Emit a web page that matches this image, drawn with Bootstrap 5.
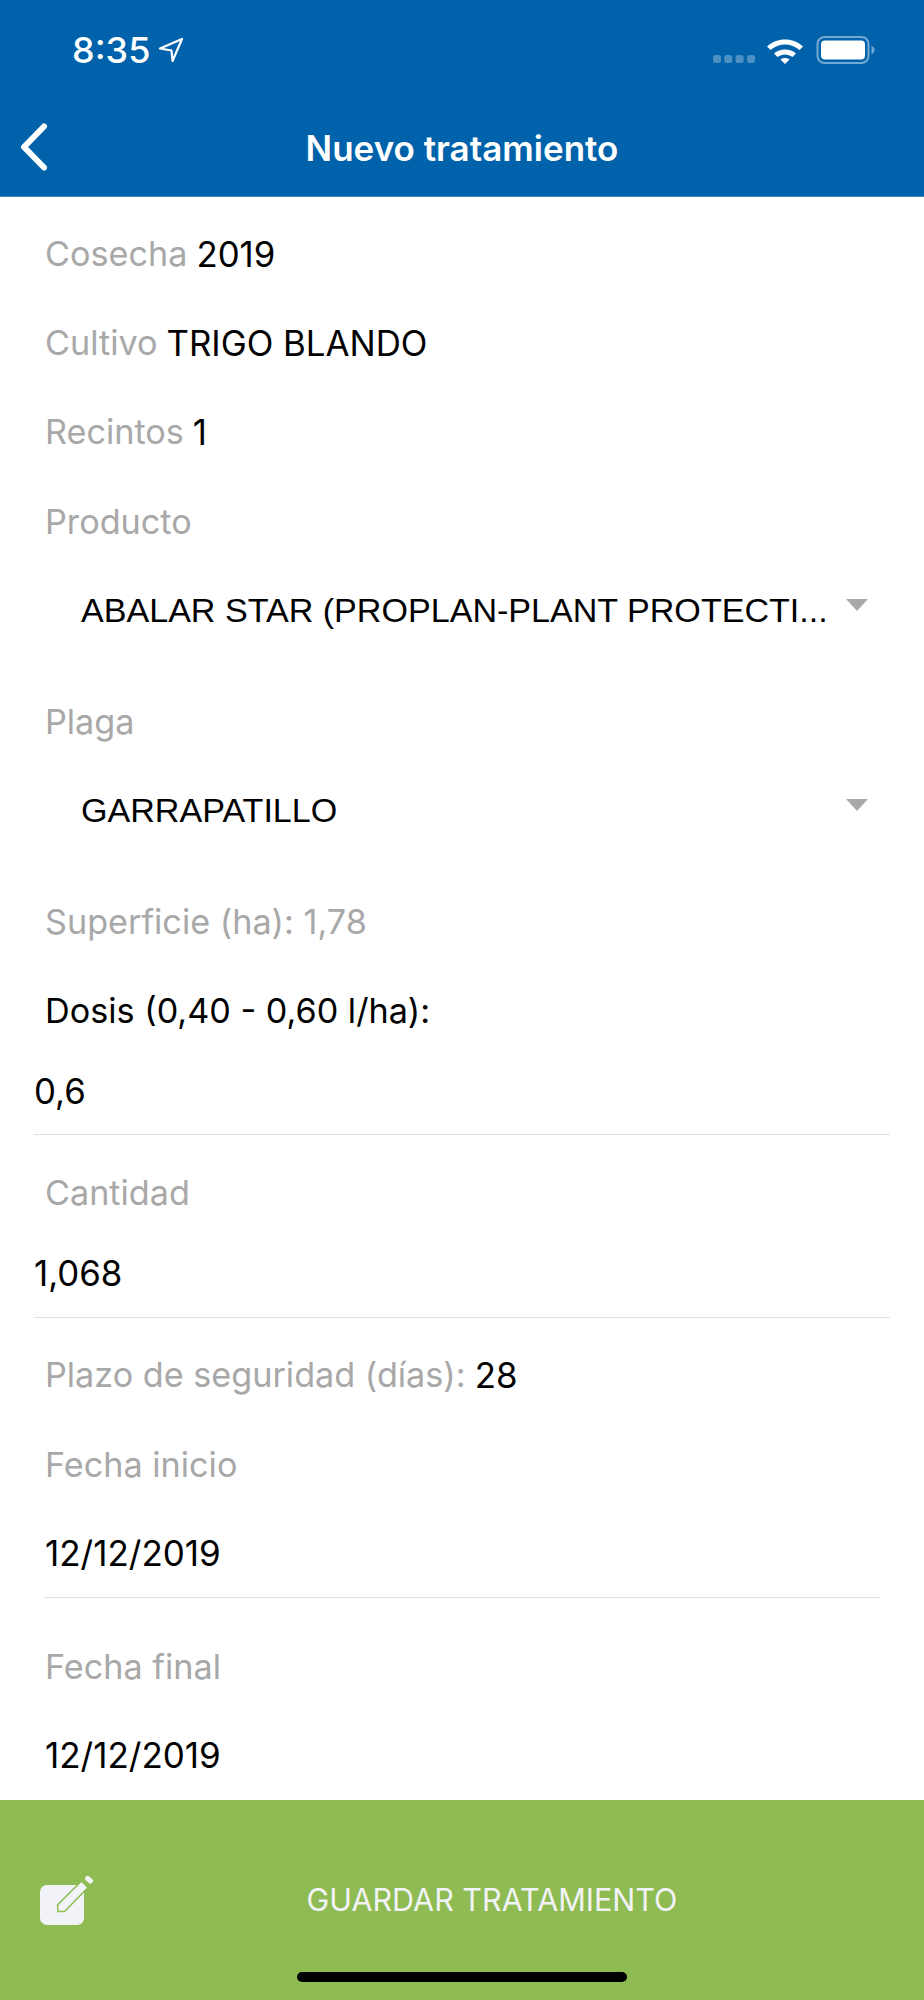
<!DOCTYPE html>
<html lang="es">
<head>
    <meta charset="UTF-8">
    <meta name="viewport" content="width=device-width, initial-scale=1.0">
    <title>Nuevo tratamiento</title>
    <link href="https://cdn.jsdelivr.net/npm/bootstrap@5.3.0/dist/css/bootstrap.min.css" rel="stylesheet">
    <style>
        body {
            font-family: "Inter", "Liberation Sans", sans-serif;
            background-color: #fff;
            color: #000;
            font-size: 34.2px;
            width: 924px;
            height: 2000px;
            overflow: hidden;
        }
        .app-screen { height: 2000px; position: relative; }
        .app-header { background-color: #0062ab; color: #fff; height: 197px; border-bottom: 1px solid #3d85bd; }
        .status-bar { height: 100px; padding: 0 48px 0 72px; }
        .status-time { font-size: 36px; font-weight: 500; margin-top: -1px; }
        .status-arrow { margin-left: 7px; }
        .status-dots { margin-top: 18px; margin-right: 11px; }
        .status-wifi { margin-right: 12px; }
        .title-bar { height: 96px; position: relative; }
        .title-text { font-size: 35px; font-weight: 600; }
        .back-icon { position: absolute; left: 19px; top: 22px; }
        .form-area { height: 1603px; padding-top: 12px; overflow: hidden; }
        .field-row { height: 89.2px; padding-left: 45px; display: flex; align-items: center; }
        .field-label { color: #a8a8a8; margin-right: 9px; }
        .field-value { font-size: 34.8px; }
        .select-row { height: 111px; padding: 0 56px 21px 81px; font-family: "Liberation Sans", sans-serif; font-size: 34.1px; }
        .caret-down { width: 0; height: 0; margin-bottom: 12px; border-left: 11px solid transparent; border-right: 11px solid transparent; border-top: 12px solid #a9a9a9; }
        .input-row { height: 80px; margin: 0 34px 13px; padding-bottom: 8px; border-bottom: 1.5px solid #e0e0e0; display: flex; align-items: center; font-size: 34.8px; }
        .date-row { height: 89px; margin: 0 44px; padding-left: 1px; display: flex; align-items: center; font-size: 35px; }
        .date-line { border-bottom: 1.5px solid #e0e0e0; margin-bottom: 24px; }
        .save-bar { background-color: #8ebc52; height: 200px; color: #f2f3f8; position: relative; }
        .save-text { font-size: 30.5px; margin-left: 60px; font-weight: 400; }
        .save-icon { position: absolute; left: 38px; top: 74px; }
        .home-bar { position: absolute; left: 297px; bottom: 18px; width: 330px; height: 10px; border-radius: 5px; background: #000; }
    </style>
</head>
<body>
    <div class="app-screen d-flex flex-column">

        <!-- Cabecera -->
        <header class="app-header">
            <div class="status-bar d-flex align-items-center justify-content-between">
                <div class="d-flex align-items-center">
                    <span class="status-time">8:35</span>
                    <svg class="status-arrow" width="28" height="28" viewBox="0 0 28 28"><path d="M25 3 3 12.500 14.500 14.500 15.500 25Z" fill="none" stroke="#fff" stroke-width="2.200" stroke-linejoin="round"/></svg>
                </div>
                <div class="d-flex align-items-center">
                    <svg class="status-dots" width="42" height="10" viewBox="0 0 42 10"><g fill="#fff" fill-opacity=".3"><rect x="0" y="1" width="8" height="8" rx="2.5"/><rect x="11.300" y="1" width="8" height="8" rx="2.5"/><rect x="22.600" y="1" width="8" height="8" rx="2.5"/><rect x="34" y="1" width="8" height="8" rx="2.5"/></g></svg>
                    <svg class="status-wifi" width="38" height="28" viewBox="0 0 38 28"><path d="M1 10.500C10.500 1 27.500 1 37 10.500L33.500 14C25.500 6.500 12.500 6.500 4.500 14Z M8 17.500C13.500 12 24.500 12 30 17.500L26.500 21C22 17.500 16 17.500 11.500 21Z M14.500 23.500C17 21.500 21 21.500 23.500 23.500L19 28Z" fill="#fff"/></svg>
                    <svg width="60" height="30" viewBox="0 0 60 30"><rect x="1.500" y="2" width="51" height="26" rx="7" fill="none" stroke="#fff" stroke-opacity=".45" stroke-width="2"/><rect x="5" y="5.500" width="44" height="19" rx="4" fill="#fff"/><path d="M55.500 11c2 .5 3 2 3 4s-1 3.500-3 4Z" fill="#fff" fill-opacity=".45"/></svg>
                </div>
            </div>
            <div class="title-bar d-flex align-items-center justify-content-center">
                <svg class="back-icon" width="30" height="50" viewBox="0 0 30 50"><path d="M25 4.500 5 25 25 45.500" fill="none" stroke="#fff" stroke-width="6" stroke-linecap="round" stroke-linejoin="round"/></svg>
                <span class="title-text">Nuevo tratamiento</span>
            </div>
        </header>

        <!-- Formulario -->
        <main class="form-area">
            <div class="field-row"><span class="field-label">Cosecha</span><span class="field-value">2019</span></div>
            <div class="field-row"><span class="field-label">Cultivo</span><span class="field-value">TRIGO BLANDO</span></div>
            <div class="field-row"><span class="field-label">Recintos</span><span class="field-value">1</span></div>
            <div class="field-row"><span class="field-label">Producto</span></div>
            <div class="select-row d-flex align-items-center justify-content-between">
                <span>ABALAR STAR (PROPLAN-PLANT PROTECTI...</span>
                <span class="caret-down"></span>
            </div>
            <div class="field-row"><span class="field-label">Plaga</span></div>
            <div class="select-row d-flex align-items-center justify-content-between">
                <span>GARRAPATILLO</span>
                <span class="caret-down"></span>
            </div>
            <div class="field-row"><span class="field-label">Superficie (ha): 1,78</span></div>
            <div class="field-row"><span>Dosis (0,40 - 0,60 l/ha):</span></div>
            <div class="input-row">0,6</div>
            <div class="field-row"><span class="field-label">Cantidad</span></div>
            <div class="input-row">1,068</div>
            <div class="field-row"><span class="field-label">Plazo de seguridad (días):</span><span class="field-value">28</span></div>
            <div class="field-row"><span class="field-label">Fecha inicio</span></div>
            <div class="date-row date-line">12/12/2019</div>
            <div class="field-row"><span class="field-label">Fecha final</span></div>
            <div class="date-row">12/12/2019</div>
        </main>

        <!-- Botón guardar -->
        <footer class="save-bar d-flex align-items-center justify-content-center">
            <svg class="save-icon" width="60" height="56" viewBox="0 0 60 56"><rect x="2" y="11" width="44" height="40" rx="7" fill="#f2f3f8"/><path d="M19.500 31 43.500 7 50 13.500 26.500 37.500H20Z" fill="#f2f3f8" stroke="#8ebc52" stroke-width="1.500"/><path d="M49.500 4.500 52.500 7" stroke="#f2f3f8" stroke-width="5" stroke-linecap="round"/></svg>
            <span class="save-text">GUARDAR TRATAMIENTO</span>
            <div class="home-bar"></div>
        </footer>
    </div>

    <script src="https://cdn.jsdelivr.net/npm/bootstrap@5.3.0/dist/js/bootstrap.bundle.min.js"></script>
</body>
</html>
